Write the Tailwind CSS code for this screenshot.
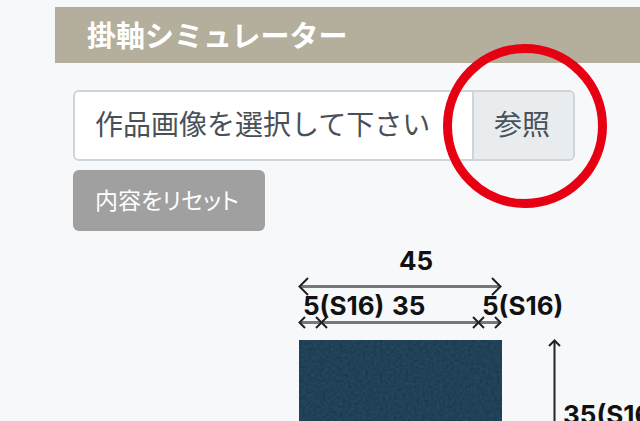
<!DOCTYPE html>
<html lang="ja">
<head>
  <meta charset="UTF-8" />
  <meta name="viewport" content="width=device-width, initial-scale=1.0" />
  <title>掛軸シミュレーター</title>
  <script src="https://cdn.jsdelivr.net/npm/@tailwindcss/browser@4"></script>
</head>
<body class="min-h-screen overflow-hidden bg-[#f7f8fa] font-['Noto_Sans_CJK_JP',sans-serif] text-[#495057]">

  <main class="pt-[7px] pl-[55px]">
    <h1 class="bg-[#b3af9c] h-14 pl-8 text-[29px] leading-[54px] font-bold text-white">掛軸シミュレーター</h1>

    <!-- 画像選択フォーム -->
    <form class="mt-[27px] mr-[65px] ml-[18px]">
      <div class="relative">
        <label for="artwork" class="flex h-[71px] w-full items-stretch overflow-hidden rounded-md border-2 border-[#ced4da] bg-white text-[28px] leading-[62px] whitespace-nowrap">
          <span class="min-w-0 grow pl-5">作品画像を選択して下さい</span>
          <span class="border-l-2 border-[#ced4da] bg-[#e9ecef] pr-[23px] pl-5">参照</span>
        </label>
        <input type="file" id="artwork" accept="image/*" class="sr-only" />
        <!-- 参照ボタンの強調 -->
        <div class="pointer-events-none absolute -top-[46px] -right-8 size-[164px] rounded-full border-[9px] border-[#e60012]"></div>
      </div>
      <button type="reset" class="mt-[9px] h-[61px] rounded-md bg-[#a0a0a0] pr-[26px] pb-1 pl-[22px] text-[23px] leading-[56px] text-white [font-feature-settings:'palt']">内容をリセット</button>
    </form>

    <!-- 寸法図 -->
    <svg class="ml-[225px] block font-['Inter',sans-serif] text-[26px] font-bold" width="360" height="210" viewBox="280 231 360 210" role="img" aria-label="掛軸の寸法図">
      <defs>
        <!-- 布地の織り目 -->
        <filter id="cloth" x="0" y="0" width="1" height="1" color-interpolation-filters="sRGB">
          <feTurbulence type="fractalNoise" baseFrequency="0.35" numOctaves="2" seed="4" />
          <feColorMatrix values="0.08 0 0 0 0.085  0.1 0 0 0 0.205  0.1 0 0 0 0.295  0 0 0 0 1" />
        </filter>
      </defs>
      <rect x="299" y="340" width="203" height="101" fill="#204159" filter="url(#cloth)" />
      <g fill="none" stroke="#77787a" stroke-width="3">
        <path d="M300 286.500H500" />
        <path d="M300 322.500H500" />
      </g>
      <g fill="none" stroke="#222" stroke-width="2">
        <path d="M308 278L299.500 286.500L308 295M492 278L500.500 286.500L492 295" />
        <path d="M305 317L299.500 322.500L305 328M495 317L500.500 322.500L495 328" />
        <path d="M316 317L327 328M327 317L316 328M473 317L484 328M484 317L473 328" />
        <path d="M554.500 341V441M549 346L554.500 340.500L560 346" />
      </g>
      <g fill="#111">
        <text x="399" y="270">45</text>
        <text x="303" y="315">5(S16)</text>
        <text x="392" y="315">35</text>
        <text x="482" y="315">5(S16)</text>
        <text x="563" y="424">35(S16)</text>
      </g>
    </svg>
  </main>

</body>
</html>
